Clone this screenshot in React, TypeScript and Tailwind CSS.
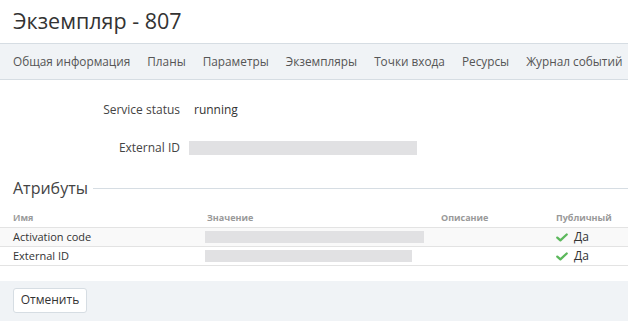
import React from 'react';

const tabs = ['Общая информация', 'Планы', 'Параметры', 'Экземпляры', 'Точки входа', 'Ресурсы', 'Журнал событий'];

const attrs = [
  { name: 'Activation code', bar: 219 },
  { name: 'External ID', bar: 207 },
];

const Check = () => (
  <svg width="12" height="9" viewBox="0 0 12 9" className="shrink-0">
    <path d="M1.3 4.6 L4.4 7.4 L10.7 1.5" fill="none" stroke="#5cb85c" strokeWidth="2.3" strokeLinecap="round" strokeLinejoin="round" />
  </svg>
);

export default function App() {
  return (
    <div className="w-[628px] h-[321px] overflow-hidden bg-white text-[#333] font-['Open_Sans',sans-serif]">
      <h1 className="h-[43px] pl-[13px] pt-[8px] text-[21.5px] leading-[26px] text-[#333]">Экземпляр - 807</h1>

      <nav className="h-[37px] flex items-center gap-[17px] pl-[13px] bg-[#f0f3f6] border-y border-[#d6dde3] text-[11.8px] text-[#555] whitespace-nowrap">
        {tabs.map((t) => (
          <span key={t}>{t}</span>
        ))}
      </nav>

      <div className="pt-[21px] flex flex-col gap-[20px] text-[12px]">
        <div className="flex items-center h-[18px]">
          <span className="w-[180px] text-right text-[#444]">Service status</span>
          <span className="pl-[14px]">running</span>
        </div>
        <div className="flex items-center h-[18px]">
          <span className="w-[180px] text-right text-[#444]">External ID</span>
          <span className="ml-[9px] w-[228px] h-[14px] bg-[#e1e1e3]" />
        </div>
      </div>

      <div className="mt-[20px] flex items-center pl-[13px]">
        <span className="text-[16px] leading-[22px] text-[#444]">Атрибуты</span>
        <span className="flex-1 ml-[5px] h-px bg-[#d6dde3]" />
      </div>

      <div className="mt-[10px]">
        <div className="h-[19px] flex items-start pt-[3px] text-[9px] leading-[12px] font-bold text-[#999] border-b border-[#e3e3e3]">
          <span className="w-[207px] pl-[13px]">Имя</span>
          <span className="w-[234px]">Значение</span>
          <span className="w-[115px]">Описание</span>
          <span>Публичный</span>
        </div>
        {attrs.map((a, i) => (
          <div key={a.name} className={`h-[19px] flex items-center text-[11px] border-b border-[#e3e3e3] ${i === 0 ? 'bg-[#f9f9f9]' : 'bg-white'}`}>
            <span className="w-[205px] pl-[13px]">{a.name}</span>
            <span className="w-[351px]">
              <span className="block h-[12px] bg-[#e1e1e3]" style={{ width: a.bar }} />
            </span>
            <span className="flex items-center gap-[6px] text-[12px]">
              <Check />
              <span>Да</span>
            </span>
          </div>
        ))}
      </div>

      <div className="mt-[15px] h-[40px] bg-[#f0f3f6] pl-[13px] pt-[5px]">
        <button className="h-[25px] w-[74px] bg-white border border-[#d6dde3] rounded-[3px] text-[12px] text-[#333]">Отменить</button>
      </div>
    </div>
  );
}
